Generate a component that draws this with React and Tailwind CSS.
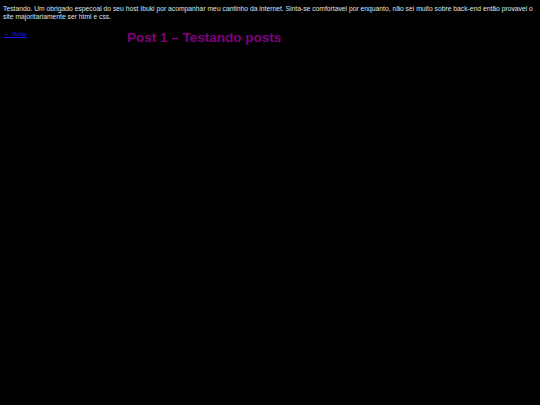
export default function App() {
  return (
    <div className="min-h-[405px] w-[540px] bg-black font-['Liberation_Sans',Arial,sans-serif]">
      <p className="pl-[3px] pr-0 pt-[5px] text-[6.75px] leading-[8px] text-[#dde6ee]">
        Testando. Um obrigado especoal do seu host Ibuki por acompanhar meu cantinho da internet. Sinta-se comfortavel por enquanto, não sei muito sobre back-end então provavel o site majoritariamente ser html e css.
      </p>
      <div className="mt-[7px] flex items-start leading-[6px]">
        <div className="w-[127px] shrink-0 pl-[4px] leading-[6px]">
          <a href="#" className="text-[6px] leading-[6px] text-[#1a1aff] underline">← Voltar</a>
        </div>
        <h1 className="pt-[2px] text-[13.5px] font-bold leading-[15px] text-[#800080]">Post 1 – Testando posts</h1>
      </div>
    </div>
  )
}
